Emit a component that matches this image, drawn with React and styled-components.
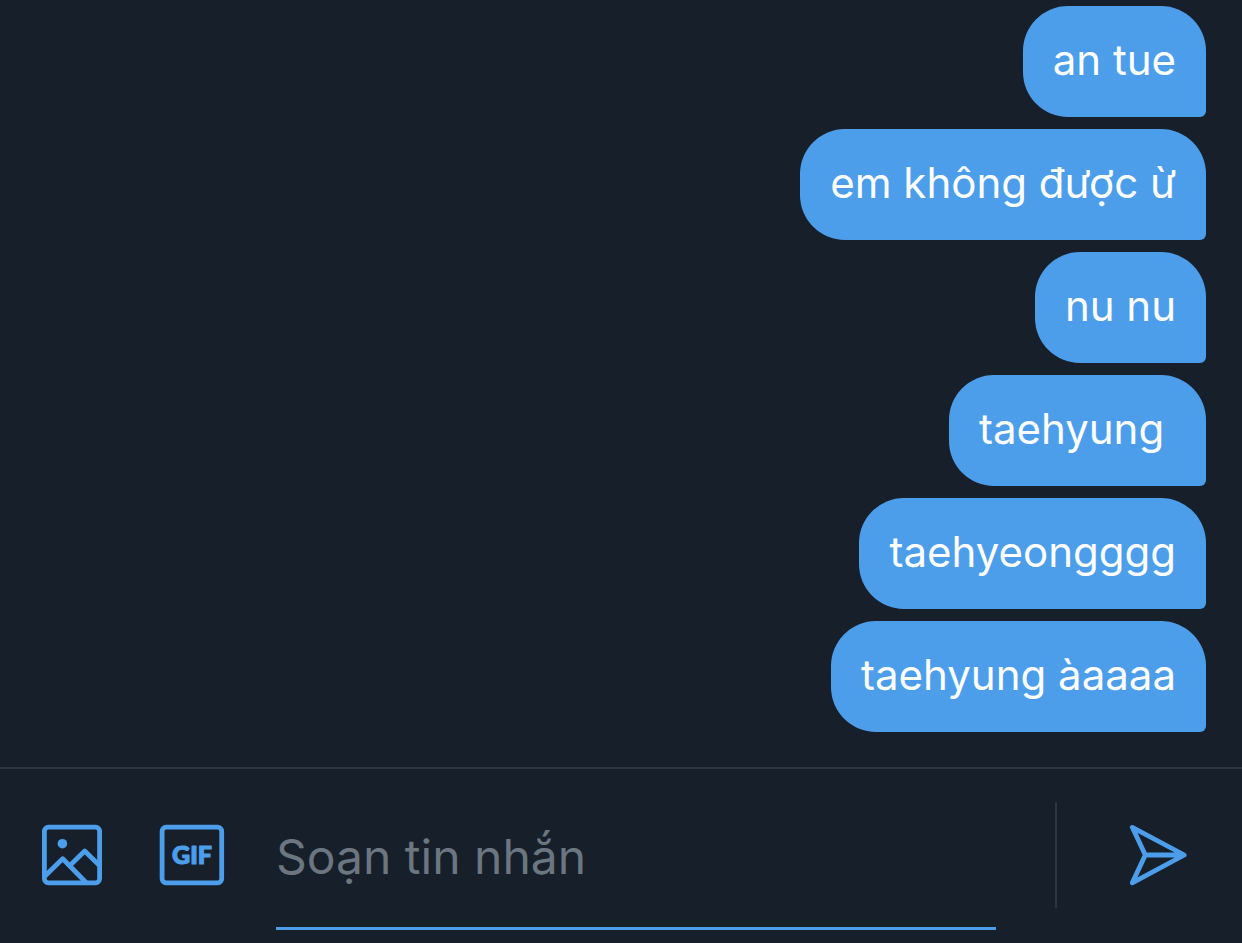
import { useState } from "react";
import styled, { createGlobalStyle } from "styled-components";

const initialMessages = [
    "an tue",
    "em không được ừ",
    "nu nu",
    "taehyung ",
    "taehyeongggg",
    "taehyung àaaaa",
];

export default function App(){
    const [messages, setMessages] = useState(initialMessages);
    const [text, setText] = useState("");

    function sendMessage(e){
        e.preventDefault();
        if(!text.trim()) return;
        setMessages([...messages, text]);
        setText("");
    }

    return (
        <Page>
            <GlobalStyle />
            <Messages>
                {messages.map((message, index) => <Bubble key={index}>{message}</Bubble>)}
            </Messages>
            <Composer onSubmit={sendMessage}>
                <Tools>
                    <IconButton type="button" aria-label="Thêm ảnh"><PhotoIcon /></IconButton>
                    <IconButton type="button" aria-label="Thêm ảnh GIF"><GifIcon /></IconButton>
                </Tools>
                <Field
                    type="text"
                    aria-label="Soạn tin nhắn"
                    placeholder="Soạn tin nhắn"
                    value={text}
                    onChange={e => setText(e.target.value)}
                />
                <SendArea>
                    <IconButton type="submit" aria-label="Gửi"><SendIcon /></IconButton>
                </SendArea>
            </Composer>
        </Page>
    );
}

function PhotoIcon(){
    return (
        <Icon viewBox="0 0 72 72">
            <rect x="8.4" y="8.2" width="55.2" height="55.6" rx="4" />
            <path d="M9 57L26.7 39.7L50 63.5M34.7 45.8L48.7 32L63.2 46.3" />
            <circle cx="26.4" cy="24.7" r="4.8" fill="currentColor" stroke="none" />
        </Icon>
    );
}

function GifIcon(){
    return (
        <Icon viewBox="0 0 72 72">
            <rect x="6.1" y="8.2" width="59.6" height="55.6" rx="4" />
            <GifText x="36" y="45" textAnchor="middle">GIF</GifText>
        </Icon>
    );
}

function SendIcon(){
    return (
        <Icon viewBox="0 0 72 72">
            <path d="M10.3 8.3L62.3 36L10.3 63.8L23.3 36ZM23.3 36H62.3" />
        </Icon>
    );
}

const GlobalStyle = createGlobalStyle`
    * {
        box-sizing: border-box;
    }

    body {
        margin: 0;
        background-color: #171f2a;
        font-family: Inter, "Liberation Sans", sans-serif;
    }
`

const Page = styled.div`
    min-height: 100vh;
    display: flex;
    flex-direction: column;
`

const Messages = styled.main`
    flex: 1;
    display: flex;
    flex-direction: column;
    align-items: flex-end;
    justify-content: flex-end;
    gap: 12px;
    padding: 6px 36px 35px 36px;
`

const Bubble = styled.p`
    margin: 0;
    padding: 28px 30px 31px 30px;
    border-radius: 45px 45px 6px 45px;
    background-color: #4c9eeb;
    color: white;
    font-size: 42px;
    line-height: 52px;
    white-space: pre-wrap;
    overflow-wrap: anywhere;
`

const Composer = styled.form`
    display: flex;
    align-items: flex-start;
    padding: 33px 48px 13px 36px;
    border-top: 2px solid #2d3540;
`

const Tools = styled.div`
    display: flex;
    gap: 48px;
    margin-right: 48px;
`

const IconButton = styled.button`
    height: 106px;
    display: flex;
    align-items: center;
    padding: 0;
    border: none;
    background: none;
    color: #4c9eeb;

    &:hover{
        filter: brightness(1.1);
        cursor: pointer;
    }
`

const Icon = styled.svg`
    width: 72px;
    height: 72px;
    fill: none;
    stroke: currentColor;
    stroke-width: 4.8;
    stroke-linejoin: round;
`

const GifText = styled.text`
    fill: currentColor;
    stroke-width: 1.2;
    font-family: Lato, "Open Sans", sans-serif;
    font-size: 25px;
    font-weight: 900;
`

const Field = styled.input`
    flex: 1;
    min-width: 0;
    height: 128px;
    padding: 22px 0 39px 0;
    border: none;
    border-bottom: 3px solid #4c9eeb;
    border-radius: 0;
    outline: none;
    background: none;
    color: white;
    font-family: inherit;
    font-size: 48px;
    line-height: 64px;

    &::placeholder{
        color: #6b7681;
        opacity: 1;
    }
`

const SendArea = styled.div`
    margin-left: 59px;
    padding-left: 65px;
    border-left: 2px solid #2d3540;
`
